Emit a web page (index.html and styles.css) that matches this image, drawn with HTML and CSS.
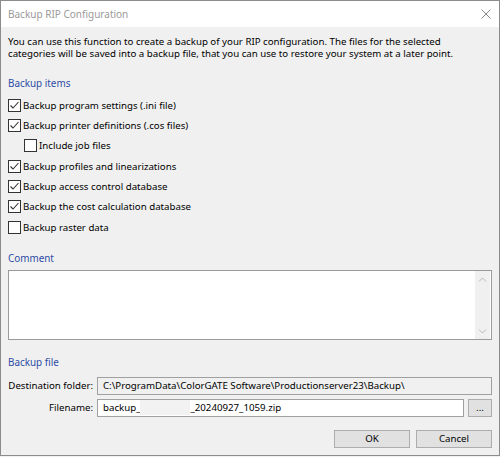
FILE: index.html
```html
<!DOCTYPE html>
<html>
<head>
<meta charset="utf-8">
<title>Backup RIP Configuration</title>
<link rel="stylesheet" href="styles.css">
</head>
<body>
<div class="window">
  <div class="titlebar">
    <span class="title">Backup RIP Configuration</span>
    <svg class="close" width="10" height="10" viewBox="0 0 10 10"><path d="M0.5 0.5 L9.5 9.5 M9.5 0.5 L0.5 9.5" stroke="#8a8a8a" stroke-width="1" fill="none"/></svg>
  </div>
  <div class="content">
    <p class="desc">You can use this function to create a backup of your RIP configuration. The files for the selected<br>categories will be saved into a backup file, that you can use to restore your system at a later point.</p>

    <h2 class="group g-items">Backup items</h2>
    <ul class="checks">
      <li class="check"><span class="box"><svg width="11" height="11" viewBox="0 0 11 11"><path d="M1.5 5.5 L4 8 L9.5 2" stroke="#333" stroke-width="1.1" fill="none"/></svg></span>Backup program settings (.ini file)</li>
      <li class="check"><span class="box"><svg width="11" height="11" viewBox="0 0 11 11"><path d="M1.5 5.5 L4 8 L9.5 2" stroke="#333" stroke-width="1.1" fill="none"/></svg></span>Backup printer definitions (.cos files)</li>
      <li class="check sub"><span class="box"></span>Include job files</li>
      <li class="check"><span class="box"><svg width="11" height="11" viewBox="0 0 11 11"><path d="M1.5 5.5 L4 8 L9.5 2" stroke="#333" stroke-width="1.1" fill="none"/></svg></span>Backup profiles and linearizations</li>
      <li class="check"><span class="box"><svg width="11" height="11" viewBox="0 0 11 11"><path d="M1.5 5.5 L4 8 L9.5 2" stroke="#333" stroke-width="1.1" fill="none"/></svg></span>Backup access control database</li>
      <li class="check"><span class="box"><svg width="11" height="11" viewBox="0 0 11 11"><path d="M1.5 5.5 L4 8 L9.5 2" stroke="#333" stroke-width="1.1" fill="none"/></svg></span>Backup the cost calculation database</li>
      <li class="check"><span class="box"></span>Backup raster data</li>
    </ul>

    <h2 class="group g-comment">Comment</h2>
    <div class="textarea">
      <div class="ta-body"></div>
      <div class="scrollbar">
        <svg width="9" height="6" viewBox="0 0 9 6"><path d="M1 4.5 L4.5 1 L8 4.5" stroke="#b8b8b8" stroke-width="1" fill="none"/></svg>
        <svg width="9" height="6" viewBox="0 0 9 6"><path d="M1 1.5 L4.5 5 L8 1.5" stroke="#b8b8b8" stroke-width="1" fill="none"/></svg>
      </div>
    </div>

    <h2 class="group g-file">Backup file</h2>
    <div class="form">
      <span class="label">Destination folder:</span>
      <div class="field readonly">C:\ProgramData\ColorGATE Software\Productionserver23\Backup\</div>
      <span class="label">Filename:</span>
      <div class="fileline">
        <div class="field">backup_<span class="redact"></span>_20240927_1059.zip</div>
        <button class="btn browse">...</button>
      </div>
    </div>

    <div class="actions">
      <button class="btn">OK</button>
      <button class="btn">Cancel</button>
    </div>
  </div>
</div>
</body>
</html>
```

FILE: styles.css
```css
html, body {
  margin: 0;
  padding: 0;
  background: #f0f0f0;
}

body {
  font-family: "Noto Sans", "Open Sans", sans-serif;
  font-size: 9.7px;
  color: #000;
}

.window {
  width: 500px;
  height: 456px;
  box-sizing: border-box;
  border: 1px solid #8c8c8c;
  background: #f0f0f0;
  display: flex;
  flex-direction: column;
}

.titlebar {
  height: 26px;
  flex: none;
  background: #fff;
  display: flex;
  align-items: center;
  justify-content: space-between;
  padding: 0 8px 0 7px;
}

.title {
  font-size: 10px;
  color: #9a9a9a;
  padding-bottom: 1px;
}

.close {
  display: block;
  margin-right: 0;
}

.content {
  padding: 0 7px;
  display: flex;
  flex-direction: column;
}

.desc {
  margin: 9px 0 0;
  line-height: 12px;
}

.group {
  margin: 0;
  font-weight: normal;
  font-size: 9.9px;
  line-height: 16px;
  height: 16px;
  color: #2d4ca6;
}

.g-items { margin-top: 15px; }
.g-comment { margin-top: 12.5px; }
.g-file { margin-top: 14.5px; }

.checks {
  list-style: none;
  margin: 4px 0 0;
  padding: 0;
}

.check {
  height: 20.35px;
  display: flex;
  align-items: center;
  gap: 1px;
}

.check.sub {
  padding-left: 16px;
}

.box {
  width: 11px;
  height: 11px;
  border: 1px solid #333;
  background: #fff;
  display: flex;
  align-items: center;
  justify-content: center;
  flex: none;
  margin-right: 1px;
}

.box svg { display: block; }

.textarea {
  margin-top: 4px;
  height: 70px;
  box-sizing: border-box;
  border: 1px solid #9a9a9a;
  background: #fff;
  display: flex;
  padding-right: 1px;
}

.ta-body { flex: 1; }

.scrollbar {
  width: 15px;
  background: #f0f0f0;
  display: flex;
  flex-direction: column;
  align-items: center;
  justify-content: space-between;
  padding: 6px 0 5px;
}

.scrollbar svg { display: block; }

.form {
  margin-top: 6.5px;
  display: grid;
  grid-template-columns: 85px 1fr;
  column-gap: 4px;
  row-gap: 4px;
  grid-auto-rows: 18px;
  align-items: center;
}

.label {
  text-align: right;
  white-space: nowrap;
}

.field {
  height: 18px;
  box-sizing: border-box;
  border: 1px solid #a0a0a0;
  background: #fff;
  padding: 0 5px;
  line-height: 16px;
  white-space: nowrap;
  overflow: hidden;
  display: flex;
  align-items: center;
}

.field.readonly { background: #f0f0f0; }

.redact {
  display: inline-block;
  width: 50px;
  height: 15px;
  background: #f2f2f2;
}

.fileline {
  display: flex;
  gap: 4px;
  height: 18px;
}

.fileline .field { flex: 1; }

.btn {
  font: inherit;
  color: #000;
  height: 18px;
  box-sizing: border-box;
  border: 1px solid #adadad;
  background: #e1e1e1;
  padding: 0;
  margin: 0;
  line-height: 14px;
  width: 76px;
}

.btn.browse {
  width: 24px;
  flex: none;
  line-height: 12px;
}

.actions {
  margin-top: 13px;
  display: flex;
  justify-content: flex-end;
  gap: 6px;
}
```
